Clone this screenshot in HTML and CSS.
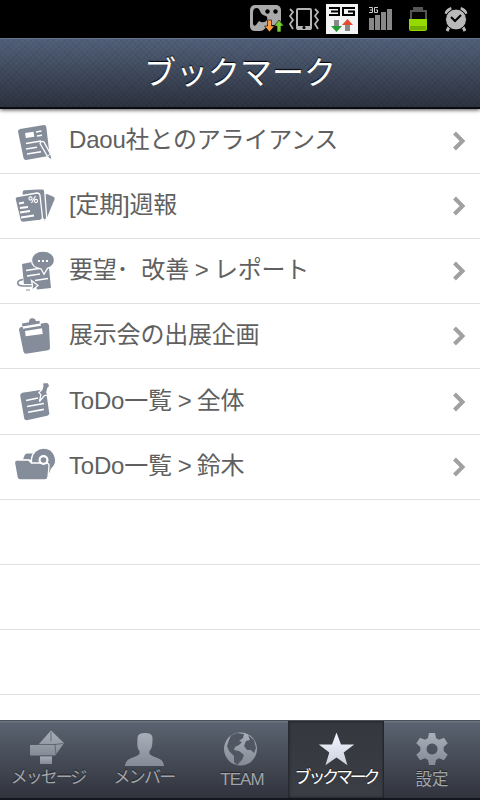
FILE: index.html
```
<!DOCTYPE html>
<html lang="ja">
<head>
<meta charset="utf-8">
<title>ブックマーク</title>
<link rel="stylesheet" href="styles.css">
</head>
<body>
<div class="status">
<svg viewBox="240 0 240 38" width="240" height="38">
  <rect x="250" y="5" width="31" height="20" rx="5" fill="#aaa"/><path fill="#aaa" d="M250 18h17v8q-3 5-7 5h-5q-5 0-5-5z"/>
  <path fill="#000" d="M257 8q2 0 3 3 1 4 6 5 2 1 1 4-2 3-6 2l-2-1-3 4q-2 2-3-1V13q0-5 4-5z"/><circle cx="267.500" cy="11.500" r="2.200"/><circle cx="275.500" cy="11.500" r="2.200"/>
  <path fill="#ff9b3c" stroke="#000" stroke-width=".6" d="M267.500 20h4v6h3l-5 6-5-6h3z"/><path fill="#7c3" stroke="#000" stroke-width=".6" d="M279 20l5 6h-3v6h-4v-6h-3z"/>
  <g fill="none" stroke="#b4b4b4"><rect x="297" y="9" width="14" height="20" rx="1" stroke-width="2"/><path stroke-width="4" d="M297 28h14"/><path stroke-width="1.800" d="M290 9l3 3-3 4 3 4-3 4 3 5M315 9l3 3-3 4 3 4-3 4 3 5"/></g><circle cx="304" cy="27.500" r="1.500"/>
  <path fill="#f4f4f4" d="M326 4h32v30h-32z"/>
  <path fill="none" stroke="#000" stroke-width="2" d="M329 8h10v7h-10m2-3.500h8M355 8h-12v7h11v-3.500h-6"/>
  <path fill="#888" d="M334 20h5v7h-5zm11 4h5v7h-5z"/><path fill="#279a38" d="M331 26h11l-5.500 6z"/><path fill="#e64b30" d="M342 25l5.500-6 5.500 6z"/>
  <path fill="none" stroke="#ccc" d="M369 7.500h3.500v5H369m1-2.500h2M378 7.500h-3.500v5h3V10h-1.500"/>
  <path fill="#888" d="M369 18h5v12h-5zm6-3h5v15h-5zm6-3h5v18h-5zm6-3h5v21h-5z"/>
  <path fill="#555" d="M413 7h10v3h4v11h-17V10h3z"/><path fill="#050505" d="M412 12h13v7h-13z"/><path fill="#94d900" d="M409 19h18v10q0 2-2 2h-14q-2 0-2-2z"/><path fill="#75b000" d="M410 26h16v4h-16z"/>
  <g fill="none" stroke="#b9b9b9"><path stroke-width="4" d="M446.500 14q1-4 5-5M465.500 14q-1-4-5-5"/><path stroke-width="3" d="M449 27l-2 4M463 27l2 4"/></g><circle cx="456" cy="19.500" r="10.500" fill="#b9b9b9" stroke="#000"/><path fill="none" stroke="#000" stroke-width="2" d="M451 17l4 4 6-6"/>
</svg>
</div>
<header class="header"><h1>ブックマーク</h1></header>
<main class="list">
  <a class="row">
    <svg class="ico" viewBox="0 109 69 64"><path d="M20 129l24-4q2 0 2.300 2l3.200 27q0 2-2.500 2.300L26 160q-2 0-2.500-2L18 131.500q0-2 2-2.500z"/><path class="cut" d="M25 133l8.500-1.300.8 5-8.500 1.300z"/><path class="ln" d="M36 132l5.500-1M37 136l5-.8M26 143.500l15-2.500M26 149l11-1.800M27 154l14-2.300"/><path class="sheet" d="M40 143.500q1-3 4-1.500l7 13 1.500 5.500-4-2.500z"/><path class="ln thin" d="M48 155.500l3-1.500"/></svg>
    <span class="label">Daou社とのアライアンス</span><svg class="chev" viewBox="0 0 14 20"><path d="M2.500 2l8 8-8 8"/></svg></a>
  <a class="row">
    <svg class="ico" viewBox="0 174 69 64"><path d="M44 195l3-1 7 3q1 1 .5 2.500L46 220l-2 1z"/><path class="sheet" d="M22 195v-3q0-2.500 2.500-2.500L42 188.500q2.500 0 2.700 2.500l2 27q0 2-2.700 2z"/><path class="sheet" d="M17 196.500l20-3.500q2.500 0 3 2.500l2.500 22q0 2.500-2.500 3l-17 2q-2.500 0-3-2.500l-5-21q0-2.500 2-2.500z"/><path class="ln thick" d="M19 203.500l5-1M20 208l8-1M20 212.500l10-1.500M21 217.500l13-2"/><g class="pct"><circle cx="30.500" cy="198.500" r="1.600"/><circle cx="36" cy="201" r="1.600"/><path d="M31.500 203l4-7"/></g></svg>
    <span class="label">[定期]週報</span><svg class="chev" viewBox="0 0 14 20"><path d="M2.500 2l8 8-8 8"/></svg></a>
  <a class="row">
    <svg class="ico" viewBox="0 239 69 64"><path d="M22 264l10-2 17 6 2 20-14 1.500-1-3-12-1.500z"/><path class="ln" d="M26 270.500l13-2M27 276l13-2M35 280.500l13-2"/><path class="sheet" d="M43 251c7 0 11.500 4 11.500 9 0 4-3 7-7 8.300l-3.500 6-3-5.500c-6-.5-9.500-4-9.500-8.800 0-5 4.500-9 11.500-9z"/><path class="dots" d="M38 261h2m2 0h2m2 0h2"/><path class="swish halo" d="M23 279.500c-7 1-7 6 0 6.500h11"/><path class="swish" d="M23 279.500c-7 1-7 6 0 6.500h11"/><path class="sheet" d="M31.500 280.500l6.500 5-6.500 5 1-5z"/><path d="M26 289.500h4v1h-4z"/></svg>
    <span class="label">要望･&nbsp; 改善<span class="gt"> &gt; </span>レポート</span><svg class="chev" viewBox="0 0 14 20"><path d="M2.500 2l8 8-8 8"/></svg></a>
  <a class="row">
    <svg class="ico" viewBox="0 304 69 64"><path d="M21 327l1.500-.3.500 2 18-3-.5-2 5.500-1q2.500 0 3 2.500l1 22.500q0 2-2 2.500l-22 3.500q-2 0-2.500-2l-4.500-22q0-2 2-2.700z"/><path d="M22 323.500l7-1.200q0-4 3-4 3-.5 4 3l3.500-.6.300 2.800-17.500 3z"/><path class="cut" d="M25 331l17-2.700.7 5.700-17 2.300z"/></svg>
    <span class="label">展示会の出展企画</span><svg class="chev" viewBox="0 0 14 20"><path d="M2.500 2l8 8-8 8"/></svg></a>
  <a class="row tall">
    <svg class="ico" viewBox="0 369 69 65"><path d="M22 392l24-3.500L49.500 413q0 2-2 2.500l-21 4.500q-2 0-2.500-2l-4-23q0-2 2-3z"/><path class="ln" d="M26 400l12-2.500M27 406l17-3M28 412l16-3"/><path class="sheet" d="M42.500 382l6-.5 1.500 4-2 2-1 4 1 3-3.500.5-5 6 1.500-7-2-2 3-3 1-3.500z"/></svg>
    <span class="label">ToDo一覧<span class="gt"> &gt; </span>全体</span><svg class="chev" viewBox="0 0 14 20"><path d="M2.500 2l8 8-8 8"/></svg></a>
  <a class="row">
    <svg class="ico" viewBox="0 435 69 64"><path d="M23 459.500l1.500-4q.5-2 3-2h6l-2 6z"/><path class="sheet" d="M43.500 448a12 12 0 0 1 8 21l-2 5-18-10v-5a12 12 0 0 1 12-11z"/><path class="sheet" d="M16.500 460h12l3 3h14q4 0 3.500 3l-1 11q-.5 3-3 3H20q-2.500 0-3-3l-2.500-14q0-3 2-3z"/><circle cx="43.500" cy="460" r="5" class="cut"/><circle cx="43.500" cy="460" r="2.800"/></svg>
    <span class="label">ToDo一覧<span class="gt"> &gt; </span>鈴木</span><svg class="chev" viewBox="0 0 14 20"><path d="M2.500 2l8 8-8 8"/></svg></a>
  <div class="row"></div><div class="row"></div><div class="row"></div>
</main>
<nav class="tabs">
  <a class="tab"><svg viewBox="0 721 96 46"><defs><linearGradient id="g" x1="0" y1="0" x2="0" y2="1"><stop offset="0" stop-color="#a8afb8"/><stop offset="1" stop-color="#858b96"/></linearGradient></defs><path fill="url(#g)" d="M51 730.500L64 743l-8 11.500-1 1H30V745h8z"/><path fill="url(#g)" d="M40 756h12v8H40z"/><path fill="none" stroke="#535a65" stroke-width=".8" d="M38 744.500h17l1 10M55 744.500l8-1M51 732v9M40 756h12"/></svg><span class="t1">メッセージ</span></a>
  <a class="tab"><svg viewBox="96 721 96 46"><path fill="url(#g)" d="M137.500 738q0-5 7.500-5t7.500 5c0 5 0 10-3 13v3q2 2 8 4 6 2 6.500 8h-39q.5-6 6.500-8 6-2 8-4v-3c-3-3-2-8-2-13z"/></svg><span class="t2">メンバー</span></a>
  <a class="tab"><svg viewBox="192 721 96 46"><circle cx="240.500" cy="749" r="16.500" fill="url(#g)"/><path fill="#505762" d="M231 735.500l6-2.500 7 1-1 4-4 3 3 1-3 3-4 2-1 3 5 1 5 4-2 5-5 5-3-3v-6l-5-5-2-5 2-6zM248 735l6 5 2 8-2 5-3-3-4 0-3-4 2-5 4-1z"/></svg><span class="t3">TEAM</span></a>
  <a class="tab active"><svg viewBox="288 721 96 46"><defs><linearGradient id="s" x1="0" y1="0" x2="0" y2="1"><stop offset="0" stop-color="#f4f6ff"/><stop offset="1" stop-color="#ccd1df"/></linearGradient></defs><path fill="url(#s)" d="M336.500 732.500l4.500 12h13.200l-10.500 8 3.700 12.700-10.900-7.700-11 7.700 3.800-12.700-10.500-8h13.200z"/></svg><span class="t4">ブックマーク</span></a>
  <a class="tab"><svg viewBox="384 721 96 46"><path fill="url(#g)" fill-rule="evenodd" d="M429 733h6l1 5 3 1.700 5-2 3.700 5.600-4 3.700v4l4 3.700-3.700 5.600-5-2-3 1.700-1 5h-6l-1-5-3-1.700-5 2-3.700-5.600 4-3.700v-4l-4-3.700 3.700-5.600 5 2 3-1.700zm3 10.500a5.500 5.500 0 1 0 .1 0z"/></svg><span class="t5">設定</span></a>
</nav>
</body>
</html>
```
FILE: styles.css
```
* { box-sizing: border-box; }
body {
  margin: 0;
  width: 480px;
  height: 800px;
  overflow: hidden;
  display: flex;
  flex-direction: column;
  background: #fff;
  font-family: "Liberation Sans", "Noto Sans CJK JP", sans-serif;
}
svg { display: block; flex: none; }
.status { height: 38px; background: #000; display: flex; justify-content: flex-end; flex: none; }
.header {
  height: 71px;
  flex: none;
  z-index: 1;
  display: flex;
  justify-content: center;
  border-top: 1px solid #66738a;
  border-bottom: 2px solid #080b10;
  background:
    repeating-linear-gradient(45deg, rgba(0,0,0,.06) 0 1px, transparent 1px 4px),
    repeating-linear-gradient(-45deg, rgba(0,0,0,.06) 0 1px, transparent 1px 4px),
    linear-gradient(#52617b, #2d333f);
  box-shadow: 0 1px 4px rgba(0,0,0,.7);
}
h1 {
  margin: 0;
  font-size: 32px;
  font-weight: 400;
  line-height: 68px;
  color: #fff;
  text-shadow: 0 -1px 1px #000;
}
.list { flex: 1; min-height: 0; overflow: hidden; }
.row { height: 65px; display: flex; align-items: center; border-bottom: 1px solid #e0e0e0; }
.row.tall { height: 66px; }
.ico { width: 69px; height: 64px; fill: #858d9b; }
.cut { fill: #fff; }
.ln { fill: none; stroke: #fff; stroke-width: 1.6; }
.thin { stroke-width: 1; }
.thick { stroke-width: 2; }
.sheet { stroke: #fff; stroke-width: 1.3; }
.pct { fill: none; stroke: #fff; stroke-width: 1.1; }
.dots { stroke: #fff; stroke-width: 1.8; }
.swish { fill: none; stroke: #858d9b; stroke-width: 1.7; }
.halo { stroke: #fff; stroke-width: 4; }
.label { flex: 1; white-space: nowrap; font-size: 24px; line-height: 62px; letter-spacing: -.2px; color: #606060; height: 64px; }
.gt { letter-spacing: -.8px; }
.chev { width: 14px; height: 20px; margin-right: 14px; fill: none; stroke: #a0a0a0; stroke-width: 4; }
.tabs {
  height: 80px;
  flex: none;
  display: flex;
  border-top: 1px solid #4a515b;
  border-bottom: 2px solid #15151d;
  background: linear-gradient(#6b7580 0 1px, #59636f 2px, #31333d);
}
.tab {
  width: 96px;
  color: #a1a5ac;
  font-size: 17px;
  line-height: 22px;
  text-align: center;
  white-space: nowrap;
  text-shadow: 0 -1px 1px #222;
}
.tab svg { width: 96px; height: 46px; }
.tab span { display: block; }
.active { color: #fff; background: linear-gradient(#34373d, #3b3e45); box-shadow: inset 1px 0 3px #202228, inset -1px 0 2px #202228; }
.t1 { letter-spacing: -2px; }
.t2 { letter-spacing: -1.7px; }
.tab .t3 { letter-spacing: -.9px; padding: 2px 0 0 4px; }
.t4 { letter-spacing: -3.2px; }
.tab .t5 { font-size: 16.500px; padding-top: 1px; }
```
